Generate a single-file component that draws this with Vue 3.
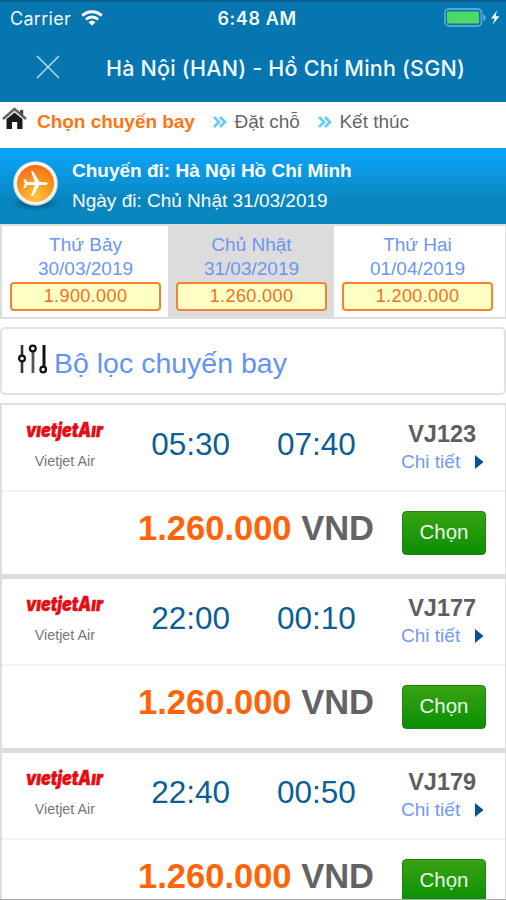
<script setup>
const days = [
  { name: 'Thứ Bảy', date: '30/03/2019', price: '1.900.000' },
  { name: 'Chủ Nhật', date: '31/03/2019', price: '1.260.000', active: true },
  { name: 'Thứ Hai', date: '01/04/2019', price: '1.200.000' },
]
const flights = [
  { code: 'VJ123', from: '05:30', to: '07:40' },
  { code: 'VJ177', from: '22:00', to: '00:10' },
  { code: 'VJ179', from: '22:40', to: '00:50' },
]
</script>

<template>
  <div class="screen">
    <header class="top">
      <div class="status">
        <div class="carrier">
          <span>Carrier</span>
          <svg class="wifi" width="22" height="16" viewBox="0 0 22 16">
            <g fill="none" stroke="#fff" stroke-width="3">
              <path d="M1.2 5.7C6.8.4 15.2.4 20.8 5.7" />
              <path d="M4.9 9.5C8.4 6.2 13.6 6.2 17.1 9.5" />
            </g>
            <path d="M7.500 12.200Q11 9 14.500 12.200L11 15.700Z" fill="#fff" />
          </svg>
        </div>
        <strong class="clock">6:48 AM</strong>
        <svg class="battery" width="56" height="20" viewBox="0 0 56 20">
          <rect x="1" y="1" width="36.500" height="17" rx="4" fill="none" stroke="#5ba6d0" stroke-width="1.800" />
          <rect x="3" y="3.500" width="32" height="12" rx="1.500" fill="#4cd964" />
          <path d="M39 6.500q3 .8 3 3.300t-3 3.300z" fill="#5ba6d0" />
          <path d="M53 2.500L47 10.500h3.800L48.600 16.500L55.500 8.200h-4z" fill="#fff" />
        </svg>
      </div>
      <div class="nav">
        <svg class="close" width="24" height="24" viewBox="0 0 24 24">
          <path d="M1 1L23 23M23 1L1 23" stroke="#b9dcf0" stroke-width="1.500" />
        </svg>
        <h1>Hà Nội (HAN) - Hồ Chí Minh (SGN)</h1>
      </div>
    </header>

    <nav class="steps">
      <svg class="home" width="25" height="24" viewBox="0 0 25 24">
        <path d="M4.500 12L12.500 5.500L20.500 12V22H15.200V15H10V22H4.500Z" fill="#1c1c1c" />
        <path d="M1 12L12.500 2L24 12" fill="none" stroke="#666" stroke-width="2.600" />
        <path d="M18 3h3.200v6l-3.200-2.800z" fill="#444" />
      </svg>
      <strong class="current">Chọn chuyến bay</strong>
      <svg class="chev" width="14" height="12" viewBox="0 0 14 12"><path d="M1 1L6 6L1 11M7 1L12 6L7 11" /></svg>
      <span>Đặt chỗ</span>
      <svg class="chev" width="14" height="12" viewBox="0 0 14 12"><path d="M1 1L6 6L1 11M7 1L12 6L7 11" /></svg>
      <span>Kết thúc</span>
    </nav>

    <section class="banner">
      <svg width="50" height="54" viewBox="0 0 50 54">
        <defs>
          <radialGradient id="orange" cx="50%" cy="85%" r="85%">
            <stop offset="0" stop-color="#ffc33c" />
            <stop offset=".5" stop-color="#fb9a22" />
            <stop offset="1" stop-color="#f36b16" />
          </radialGradient>
          <radialGradient id="shade">
            <stop offset=".3" stop-color="#045078" stop-opacity=".75" />
            <stop offset="1" stop-color="#045078" stop-opacity="0" />
          </radialGradient>
        </defs>
        <ellipse cx="25" cy="45" rx="24" ry="8" fill="url(#shade)" />
        <circle cx="25.500" cy="25.500" r="22.300" fill="#dfe3e6" />
        <circle cx="25.500" cy="25" r="21" fill="#f8f4ef" />
        <circle cx="25.500" cy="25.500" r="18.500" fill="url(#orange)" />
        <path d="M38 25.500q-1-1.500-3.800-1.500h-4.700L23 13h-2l3.700 11h-7.200L15 21h-1.500l1.300 4.500l-1.300 4.500H15l2.500-3h7.200L21 38h2l6.500-11h4.700q2.800 0 3.800-1.500z" fill="#fff" />
      </svg>
      <div class="trip">
        <strong>Chuyến đi: Hà Nội Hồ Chí Minh</strong>
        <span>Ngày đi: Chủ Nhật 31/03/2019</span>
      </div>
    </section>

    <section class="days">
      <div v-for="d in days" :key="d.date" class="day" :class="{ active: d.active }">
        <span>{{ d.name }}</span>
        <span>{{ d.date }}</span>
        <div class="fare">{{ d.price }}</div>
      </div>
    </section>

    <section class="filter">
      <svg width="30" height="30" viewBox="0 0 30 30" fill="none" stroke="#111">
        <path d="M5 1V11M5 18V29" stroke="#333" stroke-width="2.600" />
        <circle cx="5" cy="14.500" r="2.900" stroke-width="2.200" />
        <path d="M16 8V29" stroke="#555" stroke-width="2.800" />
        <circle cx="15.800" cy="4.500" r="2.900" stroke-width="2.200" />
        <path d="M27 1V23" stroke-width="3" />
        <circle cx="26.200" cy="25.500" r="2.800" stroke-width="2.200" />
      </svg>
      <span>Bộ lọc chuyến bay</span>
    </section>

    <section class="flights">
      <article v-for="f in flights" :key="f.code" class="flight">
        <div class="info">
          <div class="airline">
            <svg width="90" height="32" viewBox="0 0 90 32">
              <text class="logo" x="6" y="20.500" textLength="77" lengthAdjust="spacingAndGlyphs">vıetjetAır</text>
            </svg>
            <span>Vietjet Air</span>
          </div>
          <div class="time">{{ f.from }}</div>
          <div class="time">{{ f.to }}</div>
          <div class="detail">
            <strong>{{ f.code }}</strong>
            <a>Chi tiết<svg width="9" height="14" viewBox="0 0 9 14"><path d="M0 0L8.500 7L0 14Z" fill="#0a4f93" /></svg></a>
          </div>
        </div>
        <div class="buy">
          <div class="price"><b>1.260.000</b> VND</div>
          <button>Chọn</button>
        </div>
      </article>
    </section>
  </div>
</template>

<style>
body { margin: 0; background: #fff; overflow: hidden; }
</style>
<style scoped>
* { box-sizing: border-box; }
.screen { width: 506px; height: 900px; overflow: hidden; background: #fff; font-family: "Liberation Sans", Arial, sans-serif; font-size: 19px; color: #666; white-space: nowrap; border-bottom: 1px solid #aaa; }
.top { height: 102px; background: #0676b0; border-top: 2px solid #055e8c; color: #f3faff; font-family: Inter, sans-serif; }
.status { height: 32px; display: grid; grid-template-columns: 1fr auto 1fr; align-items: center; padding: 0 6px 0 10px; }
.carrier { display: flex; align-items: center; gap: 10px; font-size: 18px; letter-spacing: .3px; }
.wifi { margin-top: -1px; }
.clock { font-size: 18px; font-weight: 600; letter-spacing: .6px; margin-left: 4px; }
.battery { justify-self: end; }
.nav { height: 66px; display: flex; align-items: center; padding-left: 36px; }
h1 { margin: 2px 0 0 46px; font-size: 21.500px; font-weight: 500; letter-spacing: .2px; }
.steps { height: 46px; display: flex; align-items: center; padding: 0 0 7px 2px; }
.home { margin-top: -6px; }
.current { color: #ff7414; margin-left: 10px; letter-spacing: -.03px; }
.chev { margin: 1px 7.500px 0 18px; fill: none; stroke: #64cdf6; stroke-width: 2.800; }
.banner { height: 76px; display: flex; padding: 10px 0 0 10px; gap: 12px; color: #fff; background: linear-gradient(#08a5fa 0%, #0a9be8 25%, #0886bd 70%, #0887be 100%); }
.trip { display: flex; flex-direction: column; line-height: 30px; margin-top: -2px; }
.days { height: 95px; display: grid; grid-template-columns: 166px 166px 1fr; border: solid #ddd; border-width: 2px 1px 2px 2px; }
.day { display: flex; flex-direction: column; align-items: center; color: #6c96f5; line-height: 24px; padding: 7px 7px 0 8px; }
.day:last-child { padding-right: 12px; }
.day.active { background: #dcdcdc; }
.fare { width: 100%; height: 29px; margin-top: 1px; border: 2px solid #f58330; border-radius: 4px; background: #ffffc4; color: #f37022; font-size: 18px; letter-spacing: .4px; line-height: 25px; text-align: center; }
.filter { height: 68px; margin-top: 8px; border: 2px solid #e2e2e2; border-radius: 5px; display: flex; align-items: center; gap: 7px; padding: 4px 0 0 15px; font-size: 28.500px; color: #6393f8; }
.filter svg { margin-top: -9px; }
.flights { margin-top: 8px; border: solid #dedede; border-width: 2px 1px 0 2px; }
.flight { height: 174px; border-bottom: 5px solid #dcdcdc; }
.info { height: 87px; display: grid; grid-template-columns: repeat(4, 1fr); border-bottom: 2px solid #f3f3f3; }
.airline { display: flex; flex-direction: column; align-items: center; padding-top: 11px; font-size: 14.300px; line-height: 17px; color: #777; gap: 5px; }
.logo { font: italic 900 20px Inter, sans-serif; fill: #e50d12; stroke: #e50d12; stroke-width: .5px; }
.time { text-align: center; font-size: 31.500px; line-height: 78px; color: #0b5f96; }
.detail { display: flex; flex-direction: column; align-items: center; padding-top: 16px; line-height: 27px; }
.detail strong { font-size: 23.500px; color: #5e5e5e; }
.detail a { display: flex; align-items: center; gap: 15px; padding-left: 1px; color: #7299f6; }
.buy { height: 82px; display: flex; justify-content: flex-end; align-items: center; padding-right: 19px; gap: 28px; }
.price { font-size: 34.500px; font-weight: 700; color: #636363; margin-top: -10px; }
.price b { color: #ff6408; }
button { width: 84px; height: 44px; padding: 0 0 2px; border: 1px solid #1f8215; border-radius: 4px; background: linear-gradient(#39a312, #0a8f04); color: #eefbe9; font: 20.500px "Liberation Sans", Arial, sans-serif; }
</style>
